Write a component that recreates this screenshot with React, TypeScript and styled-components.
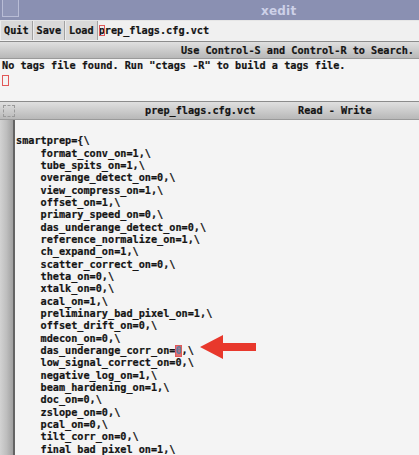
import React from "react";
import styled, { createGlobalStyle } from "styled-components";

const Global = createGlobalStyle`
  html, body { margin: 0; padding: 0; }
  body {
    width: 419px; height: 455px; overflow: hidden;
    background: #f4f4f4;
  }
`;

const mono = `"DejaVu Sans Mono", "Liberation Mono", monospace`;

const Win = styled.div`
  position: relative;
  width: 419px;
  height: 455px;
  overflow: hidden;
  display: flex;
  flex-direction: column;
  font-family: ${mono};
  font-weight: bold;
  font-size: 10.2px;
  -webkit-text-stroke: 0.2px #141414;
  color: #141414;
  background: #f4f4f4;
`;

const TitleBar = styled.div`
  height: 20px;
  flex: none;
  background: #8a90b2;
  display: grid;
  grid-template-columns: 19px 1fr;
  align-items: start;
`;

const WinIcon = styled.div`
  width: 15px;
  height: 16px;
  margin-left: 2px;
  border: 1px solid #b9bdd6;
  border-top: none;
  background: #9197b8;
`;

const Title = styled.div`
  padding-left: 242px;
  padding-top: 4px;
  font-family: "DejaVu Sans", sans-serif;
  font-weight: bold;
  font-size: 12px;
  -webkit-text-stroke: 0;
  color: #cdd1e8;
  letter-spacing: 0.2px;
`;

const ButtonRow = styled.div`
  height: 19px;
  flex: none;
  display: flex;
  background: #d6d6d6;
  border-top: 1px solid #e6e6e6;
  border-bottom: 1px solid #f2f2f2;
`;

const Button = styled.div`
  padding: 0 3px;
  display: flex;
  align-items: center;
  border-right: 1px solid #a2a2a2;
  border-left: 1px solid #ececec;
  background: #d9d9d9;
`;

const FileField = styled.div`
  flex: 1;
  display: flex;
  align-items: center;
  padding-left: 1px;
  background: #f0f0f0;
`;

const Cursor = styled.span<{ $filled?: boolean }>`
  outline: 1px solid #e05a5a;
  outline-offset: -1px;
  display: inline-block;
  ${(p) =>
    p.$filled
      ? "background: #e07070; color: #5d7ea2; -webkit-text-stroke: 0.2px #5d7ea2;"
      : ""}
`;

const Bar = styled.div<{ $align?: string }>`
  height: 16px;
  flex: none;
  display: flex;
  align-items: center;
  justify-content: ${(p) => p.$align || "flex-start"};
  background: linear-gradient(#e0e0e0, #b8b8b8);
  border-top: 1px solid #8c8c8c;
  border-bottom: 1px solid #9a9a9a;
`;

const MsgBarText = styled.div`
  padding-right: 5px;
`;

const MessageArea = styled.div`
  height: 41px;
  flex: none;
  padding: 1px 0 0 2px;
  background: #f4f4f4;
  display: flex;
  flex-direction: column;
`;

const MsgLine = styled.div`
  height: 12px;
  line-height: 12px;
  white-space: pre;
`;

const EmptyCursor = styled.div`
  margin-top: 3px;
  width: 5px;
  height: 9px;
  border: 1px solid #e25858;
`;

const StatusBar = styled(Bar)`
  height: 17px;
`;

const Grip = styled.div`
  width: 10px;
  height: 10px;
  margin-left: 3px;
  border: 1px dashed #9a9a9a;
  flex: none;
`;

const StatusName = styled.div`
  margin-left: 130px;
  width: 153px;
`;

const Editor = styled.div`
  flex: 1;
  display: flex;
  min-height: 0;
`;

const Scroll = styled.div`
  width: 13px;
  flex: none;
  background: linear-gradient(to right, #d2d2d2, #bebebe 50%, #a0a0a0);
  border-right: 2px solid #646464;
`;

const Code = styled.div`
  flex: 1;
  padding: 3px 0 0 1px;
  background: #f4f4f4;
`;

const CodeLine = styled.div`
  height: 12.33px;
  line-height: 12.33px;
  white-space: pre;
`;

const Arrow = styled.svg`
  position: absolute;
  left: 199px;
  top: 334px;
`;

const lines: string[] = [
  "",
  "smartprep={\\",
  "    format_conv_on=1,\\",
  "    tube_spits_on=1,\\",
  "    overange_detect_on=0,\\",
  "    view_compress_on=1,\\",
  "    offset_on=1,\\",
  "    primary_speed_on=0,\\",
  "    das_underange_detect_on=0,\\",
  "    reference_normalize_on=1,\\",
  "    ch_expand_on=1,\\",
  "    scatter_correct_on=0,\\",
  "    theta_on=0,\\",
  "    xtalk_on=0,\\",
  "    acal_on=1,\\",
  "    preliminary_bad_pixel_on=1,\\",
  "    offset_drift_on=0,\\",
  "    mdecon_on=0,\\",
  "CURSOR",
  "    low_signal_correct_on=0,\\",
  "    negative_log_on=1,\\",
  "    beam_hardening_on=1,\\",
  "    doc_on=0,\\",
  "    zslope_on=0,\\",
  "    pcal_on=0,\\",
  "    tilt_corr_on=0,\\",
  "    final_bad_pixel_on=1,\\",
];

export default function App() {
  return (
    <>
      <Global />
      <Win>
        <TitleBar>
          <WinIcon />
          <Title>xedit</Title>
        </TitleBar>
        <ButtonRow>
          <Button>Quit</Button>
          <Button>Save</Button>
          <Button>Load</Button>
          <FileField>
            <Cursor>p</Cursor>rep_flags.cfg.vct
          </FileField>
        </ButtonRow>
        <Bar $align="flex-end">
          <MsgBarText>Use Control-S and Control-R to Search.</MsgBarText>
        </Bar>
        <MessageArea>
          <MsgLine>No tags file found. Run "ctags -R" to build a tags file.</MsgLine>
          <EmptyCursor />
        </MessageArea>
        <StatusBar>
          <Grip />
          <StatusName>prep_flags.cfg.vct</StatusName>
          <div>Read - Write</div>
        </StatusBar>
        <Editor>
          <Scroll />
          <Code>
            {lines.map((l, i) =>
              l === "CURSOR" ? (
                <CodeLine key={i}>
                  {"    das_underange_corr_on="}
                  <Cursor $filled>0</Cursor>
                  {",\\"}
                </CodeLine>
              ) : (
                <CodeLine key={i}>{l}</CodeLine>
              )
            )}
          </Code>
        </Editor>
        <Arrow width="60" height="27" viewBox="0 0 60 27">
          <polygon points="1,13 24,1 24,9 57,9 57,17 24,17 24,25" fill="#e8382c" />
        </Arrow>
      </Win>
    </>
  );
}
